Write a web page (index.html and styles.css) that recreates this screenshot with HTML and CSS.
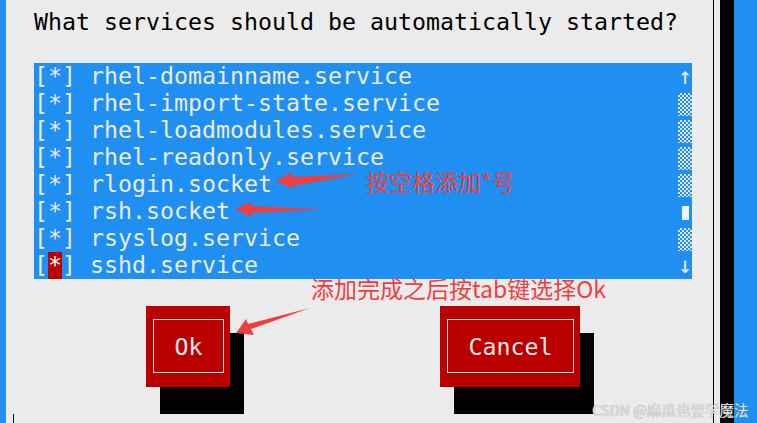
FILE: index.html
```html
<!DOCTYPE html>
<html lang="zh-CN">
<head>
  <meta charset="UTF-8">
  <title>Services</title>
  <link rel="stylesheet" href="styles.css">
</head>
<body>

  <div class="screen">
    <div class="edge"></div>

    <div class="dialog">
      <div class="title">What services should be automatically started?</div>

      <div class="listbox">
        <div class="items">
          <div class="row">[*] rhel-domainname.service</div>
          <div class="row">[*] rhel-import-state.service</div>
          <div class="row">[*] rhel-loadmodules.service</div>
          <div class="row">[*] rhel-readonly.service</div>
          <div class="row">[*] rlogin.socket</div>
          <div class="row">[*] rsh.socket</div>
          <div class="row">[*] rsyslog.service</div>
          <div class="row">[<span class="cursor">*</span>] sshd.service</div>
        </div>
        <div class="scrollbar">
          <div class="cell">↑</div>
          <div class="cell"><div class="shade"></div></div>
          <div class="cell"><div class="shade"></div></div>
          <div class="cell"><div class="shade"></div></div>
          <div class="cell"><div class="shade"></div></div>
          <div class="cell"><div class="thumb"></div></div>
          <div class="cell"><div class="shade"></div></div>
          <div class="cell">↓</div>
        </div>
      </div>

      <div class="buttons">
        <div class="btn btn-ok"><div class="btn-frame">Ok</div></div>
        <div class="btn btn-cancel"><div class="btn-frame">Cancel</div></div>
      </div>
    </div>

    <div class="gutter"></div>
    <div class="drop"></div>
    <div class="desktop"></div>
  </div>

  <!-- notes drawn on top -->
  <div class="note note-space">按空格添加*号</div>
  <div class="note note-tab">添加完成之后按tab键选择Ok</div>

  <svg class="arrows" width="757" height="423" viewBox="0 0 757 423">
    <polygon points="276,181 292,172 291,177 358,174 292,186 294,189"/>
    <polygon points="235,209 251,202 251,206 325,209.5 251,213 252,217"/>
    <polygon points="236,333 246,319 248,324 310,308 251,329 254,335"/>
  </svg>

  <div class="caret"></div>
  <div class="watermark">CSDN @麻瓜也要学魔法</div>

</body>
</html>
```

FILE: styles.css
```css
body {
  margin: 0;
  padding: 0;
  background: #ebebeb;
  font-family: 'DejaVu Sans Mono', monospace;
  font-size: 23.25px;
  overflow: hidden;
}

.screen {
  display: flex;
  height: 423px;
}

.edge {
  width: 6px;
  background: #1f8ff2;
}

.dialog {
  width: 679px;
  padding: 9px 0 0 28px;
  border-right: 1px solid #000;
  background: #ebebeb;
}

.gutter {
  width: 6px;
  background: #ebebeb;
}

.drop {
  width: 14px;
  background: #000;
}

.desktop {
  flex: 1;
  background: #1f8ff2;
}

.title {
  height: 27px;
  line-height: 26px;
  color: #000;
  white-space: pre;
}

.listbox {
  display: flex;
  width: 658px;
  margin-top: 27px;
  background: #1f8ff2;
  color: #ececec;
}

.items {
  flex: 1;
}

.row {
  height: 27px;
  line-height: 26px;
  white-space: pre;
}

.cursor {
  display: inline-block;
  height: 27px;
  vertical-align: top;
  background: #bb0000;
  color: #fff;
}

.scrollbar {
  width: 14px;
}

.cell {
  height: 27px;
  line-height: 26px;
  text-align: center;
  position: relative;
}

.shade {
  position: absolute;
  left: 0;
  right: 0;
  top: 3px;
  bottom: 1px;
  background-color: #1f8ff2;
  background-image: conic-gradient(#e4e2f2 25%, transparent 0 50%, #e4e2f2 0 75%, transparent 0);
  background-size: 4px 4px;
}

.thumb {
  position: absolute;
  left: 4px;
  top: 8px;
  width: 7px;
  height: 14px;
  background: #f2f0fa;
}

.buttons {
  display: flex;
  gap: 210px;
  margin-top: 27px;
  padding-left: 112px;
}

.btn {
  padding: 13px 6px 14px 7px;
  background: #bb0000;
  box-shadow: 14px 27px 0 #000;
  color: #ececec;
}

.btn-ok {
  width: 71px;
}

.btn-cancel {
  width: 127px;
}

.btn-frame {
  height: 52px;
  border: 1px solid #f0e0e0;
  display: flex;
  align-items: center;
  justify-content: center;
}

.note {
  position: absolute;
  color: #f23d3d;
  font-family: 'Noto Sans CJK SC', sans-serif;
  font-size: 23px;
  line-height: 26px;
  white-space: nowrap;
}

.note-space {
  left: 366px;
  top: 168px;
}

.note-tab {
  left: 311px;
  top: 275px;
}

.arrows {
  position: absolute;
  left: 0;
  top: 0;
  pointer-events: none;
}

.arrows polygon {
  fill: #f23d3d;
}

.caret {
  position: absolute;
  left: 13px;
  top: 414px;
  width: 1px;
  height: 9px;
  background: #000;
}

.watermark {
  position: absolute;
  left: 592px;
  top: 401px;
  font-family: 'Noto Sans CJK SC', sans-serif;
  font-size: 14.5px;
  line-height: 18px;
  color: #e2e2e2;
  text-shadow: 0 0 1px #8a8a8a;
  white-space: nowrap;
}
```
